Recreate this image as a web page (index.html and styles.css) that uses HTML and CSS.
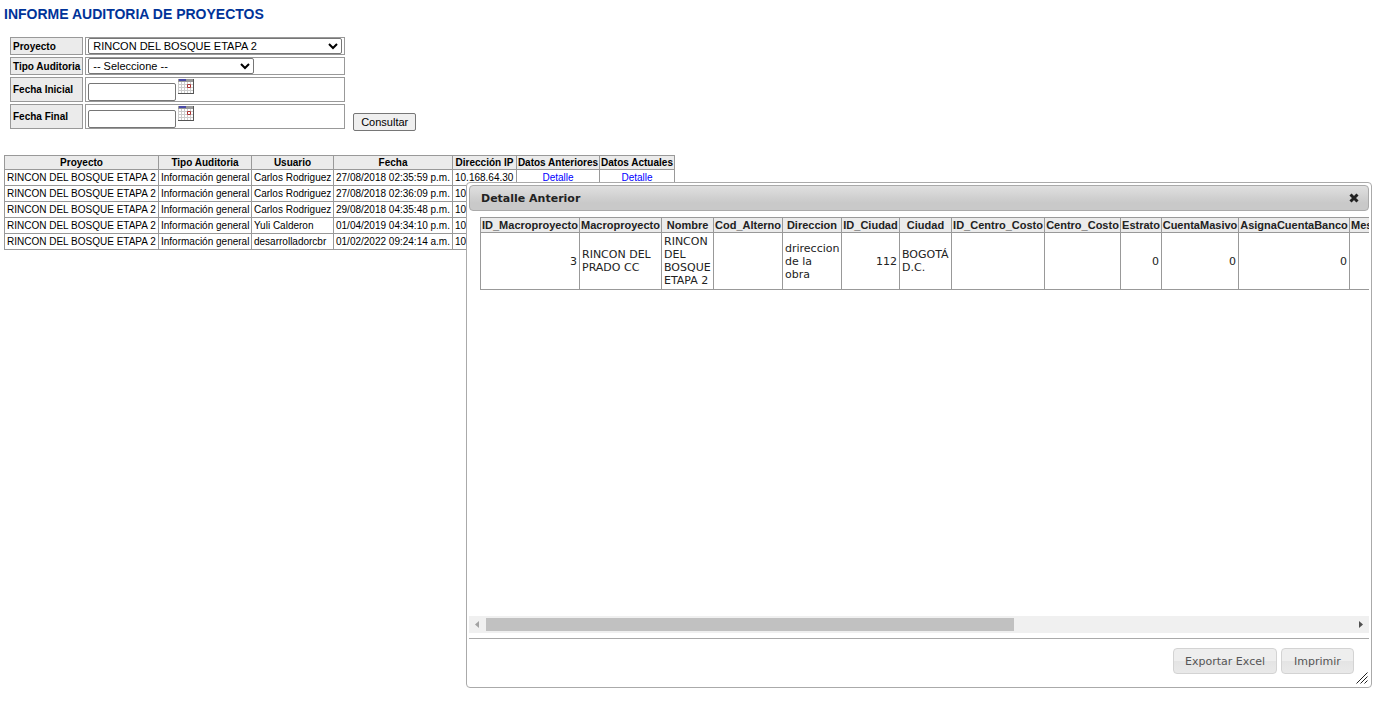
FILE: index.html
```html
<!DOCTYPE html>
<html lang="es">
<head>
<meta charset="utf-8">
<title>Informe Auditoria de Proyectos</title>
<link rel="stylesheet" href="styles.css">
</head>
<body>
<svg class="sprite" aria-hidden="true">
  <symbol id="calendar" viewBox="0 0 16 15">
    <path fill="#ccc" d="M0 0h16v15H0z"/>
    <path fill="#999" d="M0 0h16v3H0z"/>
    <path fill="#4a4aa8" d="M1 0h7v2H1z"/>
    <path stroke="#fff" stroke-width="2" stroke-dasharray="2 1" fill="none" d="M1 4h14M1 7h14M1 10h14M1 13h14"/>
    <path stroke="#555" fill="none" d="M15.500 0v15M0 14.500h16"/>
    <path stroke="#a33" fill="#fff" d="M9.500 5.500h3v3h-3z"/>
  </symbol>
</svg>
<main class="page">
  <h1 class="title">INFORME AUDITORIA DE PROYECTOS</h1>
  <form class="filters">
    <table class="filter-table">
      <tr class="row-select">
        <th scope="row"><label for="proyecto">Proyecto</label></th>
        <td><select id="proyecto" class="select-wide"><option>RINCON DEL BOSQUE ETAPA 2</option></select></td>
      </tr>
      <tr class="row-select">
        <th scope="row"><label for="tipo">Tipo Auditoria</label></th>
        <td><select id="tipo" class="select-short"><option>-- Seleccione --</option></select></td>
      </tr>
      <tr class="row-date">
        <th scope="row"><label for="inicial">Fecha Inicial</label></th>
        <td><div class="date"><input id="inicial" type="text"><button type="button" class="pick" aria-label="Calendario"><svg width="16" height="15"><use href="#calendar"/></svg></button></div></td>
      </tr>
      <tr class="row-date">
        <th scope="row"><label for="final">Fecha Final</label></th>
        <td><div class="date"><input id="final" type="text"><button type="button" class="pick" aria-label="Calendario"><svg width="16" height="15"><use href="#calendar"/></svg></button></div></td>
      </tr>
    </table>
    <button type="button" class="query">Consultar</button>
  </form>

  <table class="grid results">
    <colgroup><col class="w154"><col class="w93"><col class="w82"><col class="w119"><col class="w64"><col class="w83"><col class="w75"></colgroup>
    <thead><tr><th>Proyecto</th><th>Tipo Auditoria</th><th>Usuario</th><th>Fecha</th><th>Dirección IP</th><th>Datos Anteriores</th><th>Datos Actuales</th></tr></thead>
    <tbody>
      <tr><td>RINCON DEL BOSQUE ETAPA 2</td><td>Información general</td><td>Carlos Rodriguez</td><td>27/08/2018 02:35:59 p.m.</td><td>10.168.64.30</td><td class="center"><a href="#">Detalle</a></td><td class="center"><a href="#">Detalle</a></td></tr>
      <tr><td>RINCON DEL BOSQUE ETAPA 2</td><td>Información general</td><td>Carlos Rodriguez</td><td>27/08/2018 02:36:09 p.m.</td><td>10</td><td></td><td></td></tr>
      <tr><td>RINCON DEL BOSQUE ETAPA 2</td><td>Información general</td><td>Carlos Rodriguez</td><td>29/08/2018 04:35:48 p.m.</td><td>10</td><td></td><td></td></tr>
      <tr><td>RINCON DEL BOSQUE ETAPA 2</td><td>Información general</td><td>Yuli Calderon</td><td>01/04/2019 04:34:10 p.m.</td><td>10</td><td></td><td></td></tr>
      <tr><td>RINCON DEL BOSQUE ETAPA 2</td><td>Información general</td><td>desarrolladorcbr</td><td>01/02/2022 09:24:14 a.m.</td><td>10</td><td></td><td></td></tr>
    </tbody>
  </table>
</main>

<section class="dialog" role="dialog" aria-labelledby="dialog-title">
  <header class="dialog-bar">
    <h2 id="dialog-title">Detalle Anterior</h2>
    <button type="button" class="close" aria-label="Cerrar"><svg width="10" height="10" viewBox="0 0 10 10"><path d="M1.500 1.500l7 7M8.500 1.500l-7 7" stroke="#222" stroke-width="3"/></svg></button>
  </header>
  <div class="dialog-content">
    <table class="grid detail">
      <colgroup><col class="w99"><col class="w82"><col class="w52"><col class="w69"><col class="w59"><col class="w58"><col class="w52"><col class="w93"><col class="w76"><col class="w41"><col class="w77"><col class="w111"><col class="w93"></colgroup>
      <thead><tr><th>ID_Macroproyecto</th><th>Macroproyecto</th><th>Nombre</th><th>Cod_Alterno</th><th>Direccion</th><th>ID_Ciudad</th><th>Ciudad</th><th>ID_Centro_Costo</th><th>Centro_Costo</th><th>Estrato</th><th>CuentaMasivo</th><th>AsignaCuentaBanco</th><th class="clipped">Mes</th></tr></thead>
      <tbody><tr><td class="num">3</td><td>RINCON DEL PRADO CC</td><td>RINCON DEL BOSQUE ETAPA 2</td><td></td><td>drireccion de la obra</td><td class="num">112</td><td>BOGOTÁ D.C.</td><td></td><td></td><td class="num">0</td><td class="num">0</td><td class="num">0</td><td></td></tr></tbody>
    </table>
  </div>
  <div class="scrollbar">
    <svg width="17" height="17"><path d="M10 5v7L6 8.500z" fill="#a3a3a3"/></svg>
    <div class="track"><div class="thumb"></div></div>
    <svg width="17" height="17"><path d="M7 5v7l4-3.500z" fill="#505050"/></svg>
  </div>
  <footer class="dialog-buttons">
    <button type="button">Exportar Excel</button>
    <button type="button">Imprimir</button>
  </footer>
  <svg class="grip" width="12" height="12"><path d="M.5 11.500l11-11M4.500 11.500l7-7M8.500 11.500l3-3" stroke="#222" fill="none"/></svg>
</section>
</body>
</html>
```
FILE: styles.css
```css
* { box-sizing: border-box; }
body {
  margin: 0;
  min-height: 100vh;
  position: relative;
  overflow: hidden;
  background: #fff;
  color: #000;
  font-family: Arial, "Liberation Sans", sans-serif;
  font-size: 11px;
}
button, input, select { font-family: inherit; font-size: 11px; color: #000; }
.sprite { display: none; }
.page { padding: 6px 4px; }
.title { margin: 0; font-size: 14px; line-height: 17px; color: #039; }

.filters { display: flex; align-items: flex-end; gap: 6px; padding: 12px 4px 0; }
.filter-table { border-collapse: separate; border-spacing: 2px; }
.filter-table th, .filter-table td { border: 1px solid #999; padding: 0 2px; text-align: left; }
.filter-table th { width: 73px; background: #ebebeb; font-size: 10px; white-space: nowrap; }
.filter-table td { width: 260px; }
.row-select { height: 18px; }
.row-date { height: 25px; }
.filter-table select {
  display: block;
  height: 16px;
  padding: 0;
  border: 1px solid #767676;
  border-radius: 2px;
  background: #fff;
}
.select-wide { width: 254px; }
.select-short { width: 166px; }
.date { display: flex; align-items: flex-start; gap: 2px; height: 23px; padding-top: 1px; }
.date input {
  align-self: flex-end;
  width: 88px;
  height: 18px;
  border: 1px solid #767676;
  border-radius: 2px;
}
.pick { display: flex; padding: 0; border: 0; background: #f8f8f8; }
.query {
  height: 18px;
  width: 63px;
  padding: 0;
  border: 1px solid #767676;
  border-radius: 2px;
  background: #efefef;
}

.grid { border-collapse: collapse; table-layout: fixed; width: 0; }
.grid th, .grid td { border: 1px solid #999; }
.grid th { background: #ebebeb; padding: 0; white-space: nowrap; }
.results { margin-top: 24px; font-size: 10px; }
.results th { height: 14px; }
.results td { height: 16px; padding: 0 2px; white-space: nowrap; }
.results .center { text-align: center; }
.results a { color: #00f; text-decoration: none; }

.w41 { width: 41px; }
.w52 { width: 52px; }
.w58 { width: 58px; }
.w59 { width: 59px; }
.w64 { width: 64px; }
.w69 { width: 69px; }
.w75 { width: 75px; }
.w76 { width: 76px; }
.w77 { width: 77px; }
.w82 { width: 82px; }
.w83 { width: 83px; }
.w93 { width: 93px; }
.w99 { width: 99px; }
.w111 { width: 111px; }
.w119 { width: 119px; }
.w154 { width: 154px; }

.dialog {
  position: absolute;
  top: 182px;
  right: 10px;
  bottom: 13px;
  left: 466px;
  display: flex;
  flex-direction: column;
  padding: 2px;
  border: 1px solid #aaa;
  border-radius: 4px;
  background: #fff;
  color: #222;
  font-family: Verdana, "DejaVu Sans", sans-serif;
}
.dialog-bar {
  display: flex;
  align-items: center;
  justify-content: space-between;
  height: 26px;
  padding: 0 9px 0 11px;
  border: 1px solid #aaa;
  border-radius: 4px;
  background: linear-gradient(#e0e0e0, #c9c9c9 70%);
}
.dialog-bar h2 { margin: 0; font-size: 11px; }
.close { display: flex; padding: 0; border: 0; background: none; }
.dialog-content { flex: 1; overflow: hidden; padding: 6px 0 0 11px; }
.detail { line-height: 13px; }
.detail th { height: 15px; font-family: Arial, "Liberation Sans", sans-serif; }
.detail td { height: 57px; padding: 2px; }
.detail .num { padding-right: 2px; text-align: right; }
.detail .clipped { text-align: left; padding-left: 1px; }

.scrollbar { display: flex; height: 17px; background: #f0f0f0; }
.track { flex: 1; padding: 2px 0; }
.thumb { width: 61%; height: 13px; background: #c1c1c1; }
.dialog-buttons {
  display: flex;
  justify-content: flex-end;
  gap: 4px;
  margin-top: 5px;
  padding: 9px 15px 11px;
  border-top: 1px solid #aaa;
}
.dialog-buttons button {
  min-width: 73px;
  height: 26px;
  padding: 0 11px;
  border: 1px solid #d3d3d3;
  border-radius: 4px;
  background: linear-gradient(#eee 50%, #e4e4e4 50%, #e9e9e9);
  color: #555;
  font-family: Verdana, "DejaVu Sans", sans-serif;
}
.grip { position: absolute; right: 3px; bottom: 3px; }
```
